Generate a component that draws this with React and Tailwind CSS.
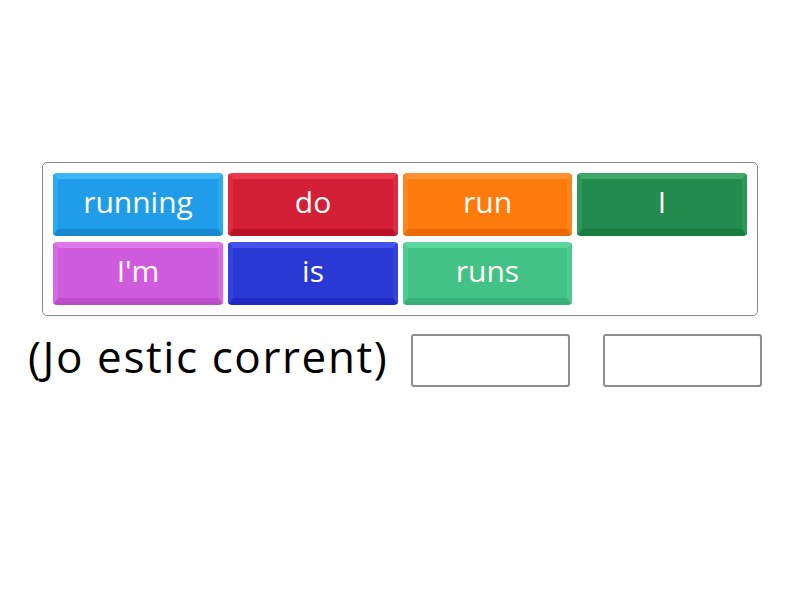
const tiles = [
  { label: "running", cls: "bg-[#209de8] border-t-[#3cb8f9] border-x-[#2aa8f0] border-b-[#1689d2]" },
  { label: "do", cls: "bg-[#d42036] border-t-[#ea3a4c] border-x-[#de2b3f] border-b-[#bc1228]" },
  { label: "run", cls: "bg-[#ff7a0d] border-t-[#ff9230] border-x-[#ff851c] border-b-[#ec6a05]" },
  { label: "I", cls: "bg-[#238b4d] border-t-[#3fa867] border-x-[#2e9858] border-b-[#197d40]" },
  { label: "I'm", cls: "bg-[#cf5cdc] border-t-[#e175ec] border-x-[#d869e4] border-b-[#bd4cca]" },
  { label: "is", cls: "bg-[#2a38d4] border-t-[#4352ec] border-x-[#3342de] border-b-[#1d29c0]" },
  { label: "runs", cls: "bg-[#43c288] border-t-[#5ad89d] border-x-[#4dcc92] border-b-[#36b078]" },
];

const Tile = ({ label, cls }) => (
  <div
    className={`h-[63px] rounded-[4px] border-x-[5px] border-t-[6px] border-b-[7px] flex items-center justify-center text-[#fffdf5] text-[30px] leading-none pb-[5px] ${cls}`}
  >
    {label}
  </div>
);

export default function App() {
  return (
    <div className="w-[800px] h-[600px] bg-white font-['Open_Sans','Noto_Sans',sans-serif] pt-[162px]">
      <div className="ml-[42px] w-[716px] h-[154px] border border-[#8a8a8a] rounded-[5px] pt-[10px] pl-[10px] pr-[10px]">
        <div className="grid grid-cols-[170px_170px_169px_170px] gap-x-[5px] gap-y-[6px]">
          {tiles.map((t) => (
            <Tile key={t.label} {...t} />
          ))}
        </div>
      </div>
      <div className="flex items-center mt-[18px]">
        <div className="ml-[28px] w-[369px] text-[44px] leading-none text-black tracking-[1.6px] pb-[9px] whitespace-nowrap">
          (Jo estic corrent)
        </div>
        <div className="ml-[14px] w-[159px] h-[53px] border-2 border-[#8c8c8c] rounded-[3px]" />
        <div className="ml-[33px] w-[159px] h-[53px] border-2 border-[#8c8c8c] rounded-[3px]" />
      </div>
    </div>
  );
}
